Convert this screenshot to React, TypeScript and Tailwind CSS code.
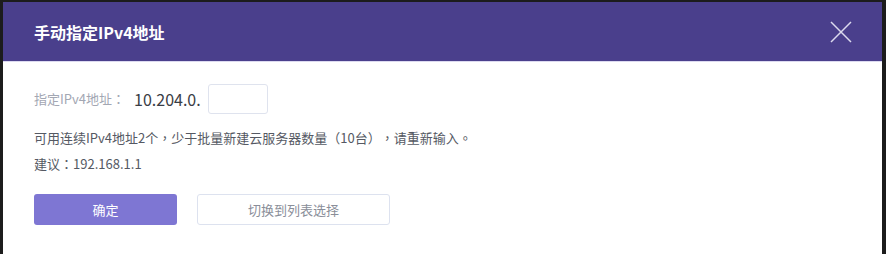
function P({ children }: { children: string }) {
  // centred full-width punctuation like the original UI font
  return <span style={{ fontFamily: '"Noto Sans CJK TC", sans-serif' }}>{children}</span>;
}

export default function App() {
  return (
    <div
      className="w-[886px] h-[254px] bg-[#1c1c1c] pl-[3px] pt-[2px] overflow-hidden [text-spacing-trim:space-all]"
      style={{ fontFamily: '"Noto Sans CJK SC", "Noto Sans", sans-serif' }}
    >
      <div className="w-[879px] h-[252px] bg-white flex flex-col">
        <div className="h-[60px] bg-[#4a3f8c] flex items-center justify-between pl-[31px] pr-[30px] border-b border-[#dcdaf0]">
          <h2 className="text-[16px] font-bold text-white">手动指定IPv4地址</h2>
          <svg width="22" height="22" viewBox="0 0 22 22" className="text-[#dcdaee]">
            <path d="M1 1L21 21M21 1L1 21" stroke="currentColor" strokeWidth="1.5" fill="none" />
          </svg>
        </div>
        <div className="pl-[31px] pt-[22px]">
          <div className="flex items-center h-[30px]">
            <span className="text-[13px] text-[#a3a7b3]">
              指定IPv4地址<P>：</P>
            </span>
            <span className="ml-[9px] text-[16px] text-[#3a3d45]">10.204.0.</span>
            <input
              type="text"
              className="ml-[7px] w-[60px] h-[30px] border border-[#dfe3ee] rounded-[3px] outline-none"
            />
          </div>
          <p className="mt-[14px] text-[13px] leading-[20px] text-[#555963]">
            可用连续IPv4地址2个<P>，</P>少于批量新建云服务器数量<P>（</P>10台<P>）</P>
            <P>，</P>请重新输入<P>。</P>
          </p>
          <p className="mt-[6px] text-[13px] leading-[20px] text-[#555963]">
            建议<P>：</P>192.168.1.1
          </p>
          <div className="flex gap-[20px] mt-[20px]">
            <button className="w-[143px] h-[31px] bg-[#7e76d3] rounded-[3px] text-white text-[13px]">
              确定
            </button>
            <button className="w-[193px] h-[31px] bg-white border border-[#dde2ef] rounded-[3px] text-[#8a8e99] text-[13px]">
              切换到列表选择
            </button>
          </div>
        </div>
      </div>
    </div>
  );
}
